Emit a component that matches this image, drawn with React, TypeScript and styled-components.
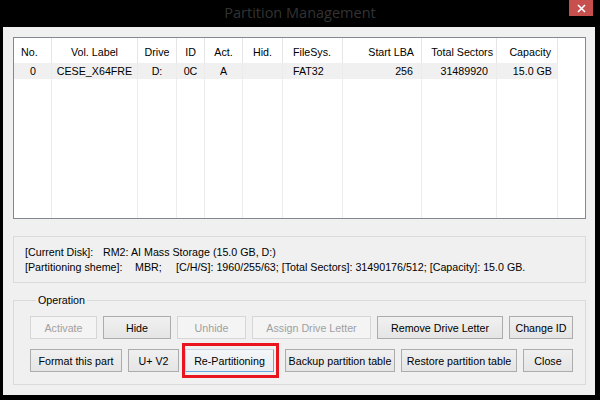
import React from 'react';
import styled, { createGlobalStyle } from 'styled-components';

const GlobalStyle = createGlobalStyle`
  html, body {
    margin: 0;
    padding: 0;
    background: #000;
  }
  * {
    box-sizing: border-box;
  }
`;

const Window = styled.div`
  width: 600px;
  height: 400px;
  background: #000;
  display: flex;
  flex-direction: column;
  font-family: 'Liberation Sans', Arial, sans-serif;
  font-size: 10.7px;
  color: #000;
  overflow: hidden;
`;

const TitleBar = styled.div`
  height: 27px;
  flex: none;
  display: flex;
  align-items: flex-start;
  position: relative;
`;

const Title = styled.div`
  flex: 1;
  text-align: center;
  font-family: 'Open Sans', 'Noto Sans', sans-serif;
  font-size: 14.5px;
  line-height: 25px;
  color: #333;
`;

const CloseButton = styled.div`
  position: absolute;
  top: 0;
  right: 7px;
  width: 24px;
  height: 16px;
  background: #c7504f;
  display: flex;
  align-items: center;
  justify-content: center;
`;

const Client = styled.div`
  flex: 1;
  margin: 0 5px 5px 3px;
  background: #f0f0f0;
  padding: 10px 9px 10px 10px;
  display: flex;
  flex-direction: column;
`;

const ListBox = styled.div`
  height: 182px;
  flex: none;
  background: #fff;
  border: 1px solid #828790;
  display: flex;
  flex-direction: column;
`;

const COLS = '38px 86px 39px 28px 38px 40px 60px 79px 75px 61px 1fr';

const HeaderRow = styled.div`
  display: grid;
  grid-template-columns: ${COLS};
  height: 25px;
  flex: none;
`;

const DataRow = styled.div`
  display: grid;
  grid-template-columns: ${COLS};
  height: 16px;
  flex: none;
`;

const FillerRow = styled.div`
  display: grid;
  grid-template-columns: ${COLS};
  flex: 1;
`;

type Align = 'left' | 'center' | 'right';

const HeadCell = styled.div<{ $align: Align; $pad: number }>`
  border-right: 1px solid #e5e5e5;
  display: flex;
  align-items: center;
  padding-top: 3px;
  justify-content: ${({ $align }) =>
    $align === 'left' ? 'flex-start' : $align === 'right' ? 'flex-end' : 'center'};
  padding-left: ${({ $align, $pad }) => ($align === 'left' ? $pad : 0)}px;
  padding-right: ${({ $align, $pad }) => ($align === 'right' ? $pad : 0)}px;
  white-space: nowrap;
`;

const Cell = styled.div<{ $align: Align; $pad: number; $filled?: boolean }>`
  border-right: 1px solid #ececec;
  background: ${({ $filled }) => ($filled ? '#f0f0f0' : 'transparent')};
  display: flex;
  align-items: center;
  justify-content: ${({ $align }) =>
    $align === 'left' ? 'flex-start' : $align === 'right' ? 'flex-end' : 'center'};
  padding-left: ${({ $align, $pad }) => ($align === 'left' ? $pad : 0)}px;
  padding-right: ${({ $align, $pad }) => ($align === 'right' ? $pad : 0)}px;
  white-space: nowrap;
`;

const LastCell = styled.div`
  border-right: none;
`;

const InfoPanel = styled.div`
  margin-top: 17px;
  height: 47px;
  flex: none;
  border: 1px solid #dadada;
  padding: 8px 0 0 11px;
  line-height: 15px;
  white-space: nowrap;
`;

const InfoLine = styled.div`
  display: flex;
`;

const InfoLabel = styled.span<{ $w: number }>`
  display: inline-block;
  width: ${({ $w }) => $w}px;
  flex: none;
`;

const GroupBox = styled.fieldset`
  margin: 11px 0 0 0;
  flex: 1;
  border: 1px solid #dadada;
  padding: 9px 0 12px 16px;
  min-width: 0;
  display: flex;
  flex-direction: column;
  gap: 10px;
`;

const Legend = styled.legend`
  padding: 0 2px;
  margin-left: 6px;
  line-height: 13px;
`;

const ButtonRow = styled.div`
  display: flex;
  gap: 6px;
`;

const Button = styled.button<{ $w: number; $disabled?: boolean; $default?: boolean }>`
  width: ${({ $w }) => $w}px;
  height: 23px;
  flex: none;
  padding: 0;
  font-family: 'Liberation Sans', Arial, sans-serif;
  font-size: 10.7px;
  color: ${({ $disabled }) => ($disabled ? '#a0a0a0' : '#000')};
  border: 1px solid ${({ $disabled }) => ($disabled ? '#d6d6d6' : '#acacac')};
  background: ${({ $disabled }) =>
    $disabled ? '#f4f4f4' : 'linear-gradient(#f0f0f0, #e5e5e5)'};
  ${({ $default }) =>
    $default &&
    `
    border-color: #c9d7e5 #6aa6e0 #6aa6e0 #c9d7e5;
    background: linear-gradient(#f4f6f8, #eaeef2);
  `}
  white-space: nowrap;
`;

const Highlight = styled.div`
  position: relative;
  margin-right: 5px;
  display: flex;
`;

const RedFrame = styled.div`
  position: absolute;
  left: -3px;
  top: -6px;
  right: -5px;
  bottom: -6px;
  border: 3px solid #e8141e;
  pointer-events: none;
`;

const columns: { title: string; align: Align; headPad: number; cellPad: number; value: string }[] = [
  { title: 'No.', align: 'left', headPad: 7, cellPad: 16, value: '0' },
  { title: 'Vol. Label', align: 'center', headPad: 0, cellPad: 0, value: 'CESE_X64FRE' },
  { title: 'Drive', align: 'center', headPad: 0, cellPad: 0, value: 'D:' },
  { title: 'ID', align: 'center', headPad: 0, cellPad: 0, value: '0C' },
  { title: 'Act.', align: 'center', headPad: 0, cellPad: 0, value: 'A' },
  { title: 'Hid.', align: 'center', headPad: 0, cellPad: 0, value: '' },
  { title: 'FileSys.', align: 'left', headPad: 10, cellPad: 10, value: 'FAT32' },
  { title: 'Start LBA', align: 'right', headPad: 7, cellPad: 8, value: '256' },
  { title: 'Total Sectors', align: 'right', headPad: 3, cellPad: 8, value: '31489920' },
  { title: 'Capacity', align: 'right', headPad: 6, cellPad: 5, value: '15.0 GB' },
];

const App: React.FC = () => {
  return (
    <>
      <GlobalStyle />
      <Window>
        <TitleBar>
          <Title>Partition Management</Title>
          <CloseButton>
            <svg width="9" height="9" viewBox="0 0 9 9">
              <path d="M1 1 L8 8 M8 1 L1 8" stroke="#fff" strokeWidth="1.6" />
            </svg>
          </CloseButton>
        </TitleBar>

        <Client>
          <ListBox>
            <HeaderRow>
              {columns.map((c) => (
                <HeadCell key={c.title} $align={c.align} $pad={c.headPad}>
                  {c.title}
                </HeadCell>
              ))}
              <LastCell />
            </HeaderRow>
            <DataRow>
              {columns.map((c) => (
                <Cell key={c.title} $align={c.align} $pad={c.cellPad} $filled>
                  {c.value}
                </Cell>
              ))}
              <LastCell />
            </DataRow>
            <FillerRow>
              {columns.map((c) => (
                <Cell key={c.title} $align={c.align} $pad={0} />
              ))}
              <LastCell />
            </FillerRow>
          </ListBox>

          <InfoPanel>
            <InfoLine>
              <InfoLabel $w={78}>[Current Disk]:</InfoLabel>
              <span>RM2: AI Mass Storage (15.0 GB, D:)</span>
            </InfoLine>
            <InfoLine>
              <InfoLabel $w={110}>[Partitioning sheme]:</InfoLabel>
              <InfoLabel $w={41}>MBR;</InfoLabel>
              <span>[C/H/S]: 1960/255/63; [Total Sectors]: 31490176/512; [Capacity]: 15.0 GB.</span>
            </InfoLine>
          </InfoPanel>

          <GroupBox>
            <Legend>Operation</Legend>
            <ButtonRow>
              <Button $w={67} $disabled>Activate</Button>
              <Button $w={68}>Hide</Button>
              <Button $w={69} $disabled>Unhide</Button>
              <Button $w={119} $disabled>Assign Drive Letter</Button>
              <Button $w={126}>Remove Drive Letter</Button>
              <Button $w={64}>Change ID</Button>
            </ButtonRow>
            <ButtonRow>
              <Button $w={92}>Format this part</Button>
              <Button $w={51}>U+ V2</Button>
              <Highlight>
                <Button $w={89} $default>Re-Partitioning</Button>
                <RedFrame />
              </Highlight>
              <Button $w={110}>Backup partition table</Button>
              <Button $w={116}>Restore partition table</Button>
              <Button $w={50}>Close</Button>
            </ButtonRow>
          </GroupBox>
        </Client>
      </Window>
    </>
  );
};

export default App;
